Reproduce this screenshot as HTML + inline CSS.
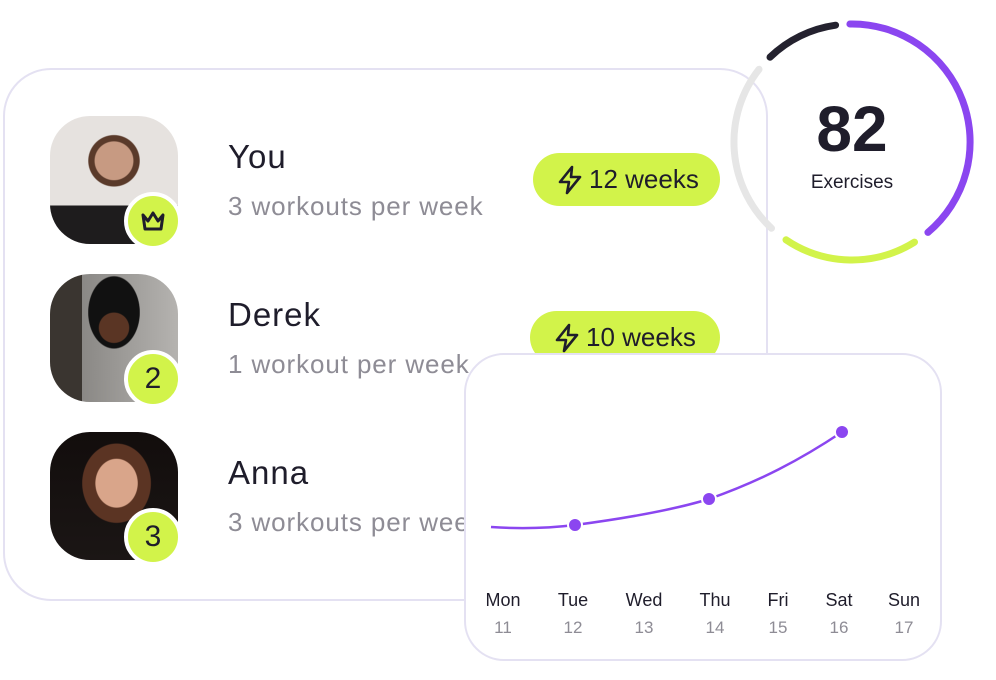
<!DOCTYPE html>
<html><head><meta charset="utf-8"><style>
*{margin:0;padding:0;box-sizing:border-box}
body{width:996px;height:680px;background:#fff;position:relative;overflow:hidden;font-family:"Liberation Sans",sans-serif;color:#1f1d2b}
.card{position:absolute;left:3px;top:68px;width:765px;height:533px;border:2px solid #e4e1f2;border-radius:48px;background:#fff}
.av{position:absolute;left:50px;width:128px;height:128px;border-radius:40px;overflow:hidden}
.badge{position:absolute;left:124px;width:58px;height:58px;border-radius:50%;background:#d2f34a;border:4px solid #fff;display:flex;align-items:center;justify-content:center;font-size:30px;color:#1f1d2b}
.name{position:absolute;left:228px;font-size:33px;font-weight:500;color:#1f1d2b;letter-spacing:1px}
.sub{position:absolute;left:228px;font-size:26px;color:#8e8c95;letter-spacing:0.9px}
.pill{position:absolute;height:53px;border-radius:27px;background:#d2f34a;display:flex;align-items:center;font-size:26px;padding-left:24px;gap:6px}
.chart{position:absolute;left:464px;top:353px;width:478px;height:308px;border:2px solid #e4e1f2;border-radius:40px;background:#fff}
.d{position:absolute;font-size:18px;transform:translateX(-50%);text-align:center}
.n{position:absolute;font-size:17px;color:#8e8c95;transform:translateX(-50%)}
</style></head><body>
<div class="card"></div>
<svg style="position:absolute;left:0;top:0" width="996" height="680">
<g fill="none" stroke-width="7" stroke-linecap="round">
<path d="M770 57.2 A118 118 0 0 1 835.6 25.2" stroke="#24222f"/>
<path d="M849.9 24 A118 118 0 0 1 927.9 232.4" stroke="#8b46f0"/>
<path d="M914.5 242.1 A118 118 0 0 1 786 239.8" stroke="#d2f34a"/>
<path d="M771.5 228.3 A118 118 0 0 1 759 69.3" stroke="#e6e6e6"/>
</g></svg>
<div style="position:absolute;left:752px;top:92px;width:200px;text-align:center;font-size:64px;font-weight:bold;color:#1f1d2b">82</div>
<div style="position:absolute;left:752px;top:172px;width:200px;text-align:center;font-size:19px;color:#1f1d2b">Exercises</div>

<div class="av" style="top:116px;background:radial-gradient(circle at 50% 35%,#c79a82 0 18%,#5a3a2a 19% 24%,transparent 25%),linear-gradient(#e6e2df 0 70%,#1e1c1d 70%)"></div>
<div class="badge" style="top:192px"><svg width="26" height="22" viewBox="0 0 26 22"><path d="M3 5 L8 11 L13 3 L18 11 L23 5 L21 19 H5 Z" fill="none" stroke="#1f1d2b" stroke-width="3" stroke-linejoin="round"/></svg></div>
<div class="av" style="top:274px;background:radial-gradient(circle at 50% 42%,#5a3524 0 15%,transparent 16%),radial-gradient(ellipse at 50% 30%,#111 0 28%,transparent 29%),linear-gradient(90deg,#3a3530 0 25%,#8a8885 25%,#b5b3b0 100%)"></div>
<div class="badge" style="top:350px">2</div>
<div class="av" style="top:432px;background:radial-gradient(ellipse at 52% 40%,#d9a58a 0 22%,#5b3423 23% 36%,transparent 37%),linear-gradient(#120d0c,#1b1615)"></div>
<div class="badge" style="top:508px">3</div>

<div class="name" style="top:138px">You</div>
<div class="sub" style="top:191px">3 workouts per week</div>
<div class="name" style="top:296px">Derek</div>
<div class="sub" style="top:349px">1 workout per week</div>
<div class="name" style="top:454px">Anna</div>
<div class="sub" style="top:507px">3 workouts per week</div>

<div class="pill" style="left:533px;top:153px;width:187px"><svg width="26" height="30" viewBox="0 0 26 30"><path d="M15 2 L3 17 H12 L10 28 L23 12 H14 Z" fill="none" stroke="#1f1d2b" stroke-width="2.6" stroke-linejoin="round"/></svg>12 weeks</div>
<div class="pill" style="left:530px;top:311px;width:190px"><svg width="26" height="30" viewBox="0 0 26 30"><path d="M15 2 L3 17 H12 L10 28 L23 12 H14 Z" fill="none" stroke="#1f1d2b" stroke-width="2.6" stroke-linejoin="round"/></svg>10 weeks</div>

<div class="chart"></div>
<svg style="position:absolute;left:0;top:0" width="996" height="680">
<path d="M491 527 C520 529 550 528 575 525 C620 519 670 511 709 499 C760 481 800 460 842 432" fill="none" stroke="#8b46f0" stroke-width="2.5"/>
<g fill="#8b46f0" stroke="#fff" stroke-width="2"><circle cx="575" cy="525" r="7"/><circle cx="709" cy="499" r="7"/><circle cx="842" cy="432" r="7"/></g>
</svg>
<div class="d" style="left:503px;top:590px">Mon</div><div class="n" style="left:503px;top:618px">11</div>
<div class="d" style="left:573px;top:590px">Tue</div><div class="n" style="left:573px;top:618px">12</div>
<div class="d" style="left:644px;top:590px">Wed</div><div class="n" style="left:644px;top:618px">13</div>
<div class="d" style="left:715px;top:590px">Thu</div><div class="n" style="left:715px;top:618px">14</div>
<div class="d" style="left:778px;top:590px">Fri</div><div class="n" style="left:778px;top:618px">15</div>
<div class="d" style="left:839px;top:590px">Sat</div><div class="n" style="left:839px;top:618px">16</div>
<div class="d" style="left:904px;top:590px">Sun</div><div class="n" style="left:904px;top:618px">17</div>
</body></html>
